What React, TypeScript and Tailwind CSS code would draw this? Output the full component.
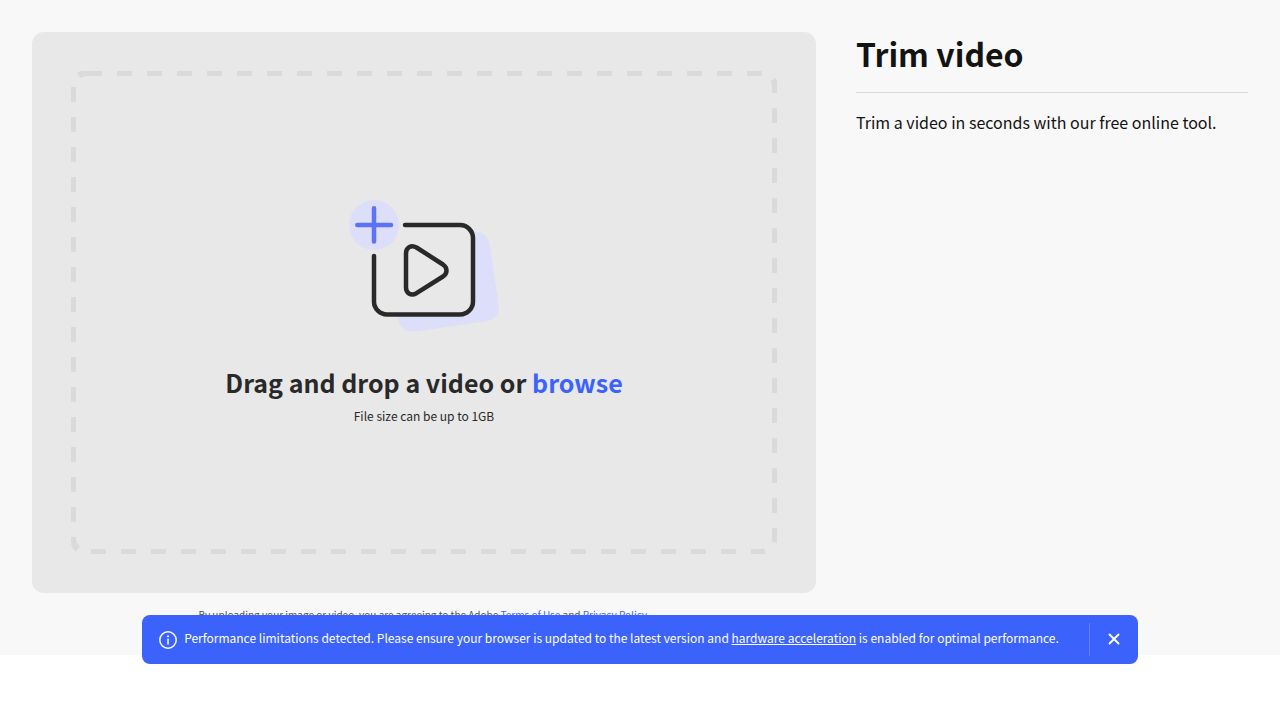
import { useRef, useState } from 'react';

function VideoIllustration() {
  return (
    <svg width="150" height="132" viewBox="0 0 150 132" fill="none" aria-hidden="true">
      <path
        d="M124 32C132 31 139.5 36 140.8 45L149.8 107C150.8 114 146 120 138 121L67 131.4C57 132.6 50.5 127 49 118L49 100L110 40Z"
        fill="#dcdefa"
      />
      <path
        d="M56 25H111A13 13 0 0 1 124 38V101.5A13 13 0 0 1 111 114.5H38A13 13 0 0 1 25 101.5V56"
        fill="#e8e8e8"
        stroke="#292929"
        strokeWidth="4.5"
        strokeLinecap="round"
      />
      <path
        d="M57 53.5C57 47.5 62 44.5 67.5 47.5L94 64.5C98.7 67.8 98.7 73.2 94 76.5L67.5 93.2C62 96.2 57 93.5 57 87.5Z"
        stroke="#292929"
        strokeWidth="4.5"
        strokeLinejoin="round"
      />
      <circle cx="25" cy="25" r="25" fill="#dcdefa" />
      <path d="M8.3 25H42M25 8.3V41.5" stroke="#5a73f8" strokeWidth="4.5" strokeLinecap="round" />
    </svg>
  );
}

function DropZone() {
  const inputRef = useRef<HTMLInputElement>(null);

  return (
    <div className="rounded-xl bg-[#e8e8e8] p-[39px]">
      <div className="relative flex min-h-[483px] flex-col items-center justify-center overflow-hidden rounded-xl">
        <svg className="absolute inset-0 h-full w-full" aria-hidden="true">
          <rect
            width="100%"
            height="100%"
            rx="16"
            fill="none"
            stroke="#dadada"
            strokeWidth="10"
            strokeDasharray="15 15"
          />
        </svg>
        <div className="relative flex flex-col items-center pt-0.5 text-center text-[#292929]">
          <VideoIllustration />
          <h2 className="mt-8 text-[25px] leading-9 font-bold">
            Drag and drop a video or{' '}
            <button
              type="button"
              onClick={() => inputRef.current?.click()}
              className="cursor-pointer text-[#3b63fb]"
            >
              browse
            </button>
          </h2>
          <p className="mt-1 text-xs leading-6">File size can be up to 1GB</p>
          <input ref={inputRef} type="file" accept="video/*" aria-label="Video file" className="hidden" />
        </div>
      </div>
    </div>
  );
}

function Toast({ onClose }: { onClose: () => void }) {
  return (
    <div className="fixed inset-x-0 bottom-14 flex justify-center px-4">
      <div role="status" className="flex items-center rounded-lg bg-[#3b63fb] py-2 pr-2 pl-4 text-white">
        <svg width="20" height="20" viewBox="0 0 20 20" fill="none" className="shrink-0" aria-hidden="true">
          <circle cx="10" cy="10" r="8.2" stroke="currentColor" strokeWidth="1.5" />
          <circle cx="10" cy="6.3" r="1" fill="currentColor" />
          <path d="M10 9.2V14" stroke="currentColor" strokeWidth="1.5" strokeLinecap="round" />
        </svg>
        <p className="ml-1.5 pb-1 text-xs leading-5">
          Performance limitations detected. Please ensure your browser is updated to the latest version and{' '}
          <a href="#hardware-acceleration" className="underline">
            hardware acceleration
          </a>{' '}
          is enabled for optimal performance.
        </p>
        <div className="ml-[30px] flex h-[33px] items-center border-l border-white/20 pb-0.5 pl-2">
          <button
            type="button"
            aria-label="Close"
            onClick={onClose}
            className="flex size-8 cursor-pointer items-center justify-center"
          >
            <svg width="12" height="12" viewBox="0 0 12 12" fill="none" aria-hidden="true">
              <path d="M1.5 1.5L10.5 10.5M10.5 1.5L1.5 10.5" stroke="currentColor" strokeWidth="1.9" strokeLinecap="round" />
            </svg>
          </button>
        </div>
      </div>
    </div>
  );
}

export default function App() {
  const [showToast, setShowToast] = useState(true);

  return (
    <div className="min-h-screen bg-white font-['Noto_Sans_CJK_JP','Noto_Sans',sans-serif]">
      <main className="flex gap-10 bg-[#f8f8f8] px-8 pt-8 pb-8">
        <div className="min-w-0 flex-2">
          <DropZone />
          <p className="mt-3.5 text-center text-[10px] leading-4 text-[#505050]">
            By uploading your image or video, you are agreeing to the Adobe{' '}
            <a href="#terms" className="text-[#3b63fb]">
              Terms of Use
            </a>{' '}
            and{' '}
            <a href="#privacy" className="text-[#3b63fb]">
              Privacy Policy
            </a>
            .
          </p>
        </div>
        <aside className="min-w-0 flex-1 text-[#131313]">
          <h1 className="border-b border-[#dadada] pb-[18px] text-[32px] leading-[42px] font-bold">Trim video</h1>
          <p className="mt-4 text-base leading-[26px]">Trim a video in seconds with our free online tool.</p>
        </aside>
      </main>

      {showToast && <Toast onClose={() => setShowToast(false)} />}
    </div>
  );
}
